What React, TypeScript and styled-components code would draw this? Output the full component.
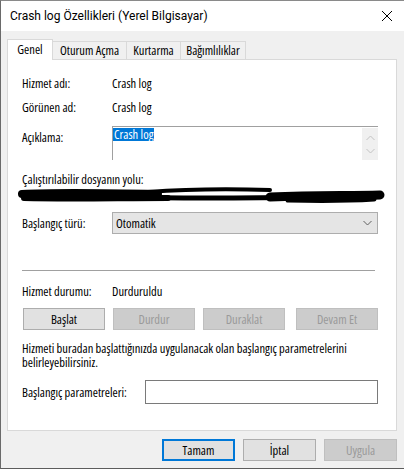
import React from "react";
import styled, { createGlobalStyle } from "styled-components";

const Global = createGlobalStyle`
  html, body { margin: 0; padding: 0; background: #f0f0f0; }
  * { box-sizing: border-box; }
  body {
    font-family: "Open Sans", "Liberation Sans", Arial, sans-serif;
    font-stretch: condensed;
    font-size: 12.5px;
    color: #000;
  }
`;

const Window = styled.div`
  width: 404px;
  height: 469px;
  display: flex;
  flex-direction: column;
  border-top: 1px solid #8a8a8a;
  border-bottom: 1px solid #5c5c5c;
  border-left: 1px solid #6a6a6a;
  background: #f0f0f0;
  white-space: nowrap;
  line-height: 15px;
`;

const TitleBar = styled.div`
  height: 30px;
  background: #fff;
  display: flex;
  align-items: center;
  justify-content: space-between;
  padding: 0 8px 0 9px;
  font-family: Roboto, "Liberation Sans", sans-serif;
  font-stretch: normal;
  font-size: 12px;
`;

const CloseBtn = styled.div`
  width: 12px;
  height: 12px;
  margin-right: 3px;
  display: flex;
`;

const Body = styled.div`
  flex: 1;
  display: flex;
  flex-direction: column;
  padding: 8px 7px 0 6px;
`;

const TabStrip = styled.div`
  height: 20px;
  display: flex;
  align-items: flex-end;
  position: relative;
  z-index: 1;
`;

const Tab = styled.div<{ $w: number; $active?: boolean }>`
  width: ${(p) => p.$w}px;
  height: ${(p) => (p.$active ? 21 : 18)}px;
  margin-bottom: ${(p) => (p.$active ? -1 : 0)}px;
  background: ${(p) => (p.$active ? "#fff" : "#f0f0f0")};
  border-top: 1px solid #d9d9d9;
  border-right: 1px solid #d9d9d9;
  border-left: ${(p) => (p.$active ? "1px solid #d9d9d9" : "none")};
  display: flex;
  align-items: center;
  justify-content: center;
  padding-bottom: ${(p) => (p.$active ? 2 : 0)}px;
`;

const Panel = styled.div`
  height: 372px;
  background: #fff;
  border: 1px solid #d9d9d9;
  padding: 16px 18px 0 14px;
  display: flex;
  flex-direction: column;
`;

const InfoRow = styled.div<{ $mt?: number }>`
  display: grid;
  grid-template-columns: 90px 1fr;
  align-items: start;
  margin-top: ${(p) => p.$mt ?? 0}px;
`;

const Label = styled.div<{ $pt?: number }>`
  padding-top: ${(p) => p.$pt ?? 0}px;
`;

const TextArea = styled.div`
  height: 34px;
  border-top: 1px solid #a0a0a0;
  border-left: 1px solid #a0a0a0;
  display: flex;
  justify-content: space-between;
  padding: 1px 0 0 0;
`;

const Selected = styled.span`
  background: #0078d7;
  color: #fff;
  line-height: 13px;
  height: 13px;
  padding: 0 1px 0 1px;
  align-self: flex-start;
`;

const ScrollBar = styled.div`
  width: 16px;
  background: #f0f0f0;
  display: flex;
  flex-direction: column;
  align-items: center;
  justify-content: space-around;
  padding: 3px 0;
`;

const PathLabel = styled.div`
  margin-top: 12px;
`;

const Scribble = styled.svg`
  display: block;
  margin-left: -4px;
`;

const Select = styled.div`
  height: 22px;
  background: #e5e5e5;
  border: 1px solid #adadad;
  display: flex;
  align-items: center;
  justify-content: space-between;
  padding: 0 5px 0 3px;
`;

const Separator = styled.div`
  height: 1px;
  background: #a0a0a0;
  margin: 36px 3px 0 0;
`;

const ButtonRow = styled.div`
  display: flex;
  gap: 8px;
  margin-top: 9px;
  padding-left: 1px;
`;

const Button = styled.div<{ $disabled?: boolean; $w?: number; $default?: boolean; $push?: boolean }>`
  width: ${(p) => p.$w ?? 82}px;
  height: 22px;
  display: flex;
  align-items: center;
  justify-content: center;
  background: ${(p) => (p.$disabled ? "#cccccc" : "#e1e1e1")};
  border: ${(p) =>
    p.$default ? "2px solid #0078d7" : p.$disabled ? "1px solid #bfbfbf" : "1px solid #adadad"};
  color: ${(p) => (p.$disabled ? "#9a9a9a" : "#000")};
  margin-left: ${(p) => (p.$push ? "auto" : "0")};
`;

const Paragraph = styled.div`
  margin-top: 12px;
  line-height: 14px;
`;

const ParamRow = styled.div`
  display: flex;
  align-items: center;
  margin-top: 10px;
`;

const ParamLabel = styled.div`
  width: 123px;
`;

const ParamInput = styled.div`
  flex: 1;
  height: 24px;
  border: 1px solid #7a7a7a;
  background: #fff;
`;

const Footer = styled.div`
  display: flex;
  justify-content: flex-end;
  gap: 8px;
  padding-top: 8px;
`;

const Chevron = ({ up, color }: { up?: boolean; color: string }) => (
  <svg width="9" height="6" viewBox="0 0 9 6">
    <path
      d={up ? "M0.5 5 L4.5 1 L8.5 5" : "M0.5 1 L4.5 5 L8.5 1"}
      fill="none"
      stroke={color}
      strokeWidth="1"
    />
  </svg>
);

export default function App() {
  return (
    <>
      <Global />
      <Window>
        <TitleBar>
          <span>Crash log Özellikleri (Yerel Bilgisayar)</span>
          <CloseBtn>
            <svg width="12" height="12" viewBox="0 0 12 12">
              <path d="M1 1 L11 11 M11 1 L1 11" stroke="#000" strokeWidth="1" />
            </svg>
          </CloseBtn>
        </TitleBar>
        <Body>
          <TabStrip>
            <Tab $w={46} $active>Genel</Tab>
            <Tab $w={74}>Oturum Açma</Tab>
            <Tab $w={54}>Kurtarma</Tab>
            <Tab $w={65}>Bağımlılıklar</Tab>
          </TabStrip>
          <Panel>
            <InfoRow>
              <Label>Hizmet adı:</Label>
              <div>Crash log</div>
            </InfoRow>
            <InfoRow $mt={9}>
              <Label>Görünen ad:</Label>
              <div>Crash log</div>
            </InfoRow>
            <InfoRow $mt={11}>
              <Label $pt={4}>Açıklama:</Label>
              <TextArea>
                <Selected>Crash log</Selected>
                <ScrollBar>
                  <Chevron up color="#c2c2c2" />
                  <Chevron color="#c2c2c2" />
                </ScrollBar>
              </TextArea>
            </InfoRow>
            <PathLabel>Çalıştırılabilir dosyanın yolu:</PathLabel>
            <Scribble width="370" height="19" viewBox="0 0 370 19">
              <path d="M4 7 C 40 5, 90 6, 140 7" stroke="#000" strokeWidth="8" fill="none" strokeLinecap="round" />
              <path d="M6 11 C 50 12, 100 11, 150 11" stroke="#000" strokeWidth="6" fill="none" strokeLinecap="round" />
              <path d="M130 5 C 170 2, 220 2, 252 3" stroke="#000" strokeWidth="4" fill="none" strokeLinecap="round" />
              <path d="M100 10 C 180 12, 240 11, 300 10" stroke="#000" strokeWidth="5" fill="none" strokeLinecap="round" />
              <path d="M252 10 C 300 8, 330 9, 362 8" stroke="#000" strokeWidth="9" fill="none" strokeLinecap="round" />
              <path d="M270 13 C 310 14, 340 13, 356 12" stroke="#000" strokeWidth="5" fill="none" strokeLinecap="round" />
            </Scribble>
            <InfoRow $mt={6}>
              <Label $pt={4}>Başlangıç türü:</Label>
              <Select>
                <span>Otomatik</span>
                <Chevron color="#606060" />
              </Select>
            </InfoRow>
            <Separator />
            <InfoRow $mt={13}>
              <Label>Hizmet durumu:</Label>
              <div>Durduruldu</div>
            </InfoRow>
            <ButtonRow>
              <Button>Başlat</Button>
              <Button $disabled>Durdur</Button>
              <Button $disabled>Duraklat</Button>
              <Button $disabled $push>Devam Et</Button>
            </ButtonRow>
            <Paragraph>
              Hizmeti buradan başlattığınızda uygulanacak olan başlangıç parametrelerini
              <br />
              belirleyebilirsiniz.
            </Paragraph>
            <ParamRow>
              <ParamLabel>Başlangıç parametreleri:</ParamLabel>
              <ParamInput />
            </ParamRow>
          </Panel>
          <Footer>
            <Button $w={73} $default>Tamam</Button>
            <Button $w={73}>İptal</Button>
            <Button $w={73} $disabled>Uygula</Button>
          </Footer>
        </Body>
      </Window>
    </>
  );
}
